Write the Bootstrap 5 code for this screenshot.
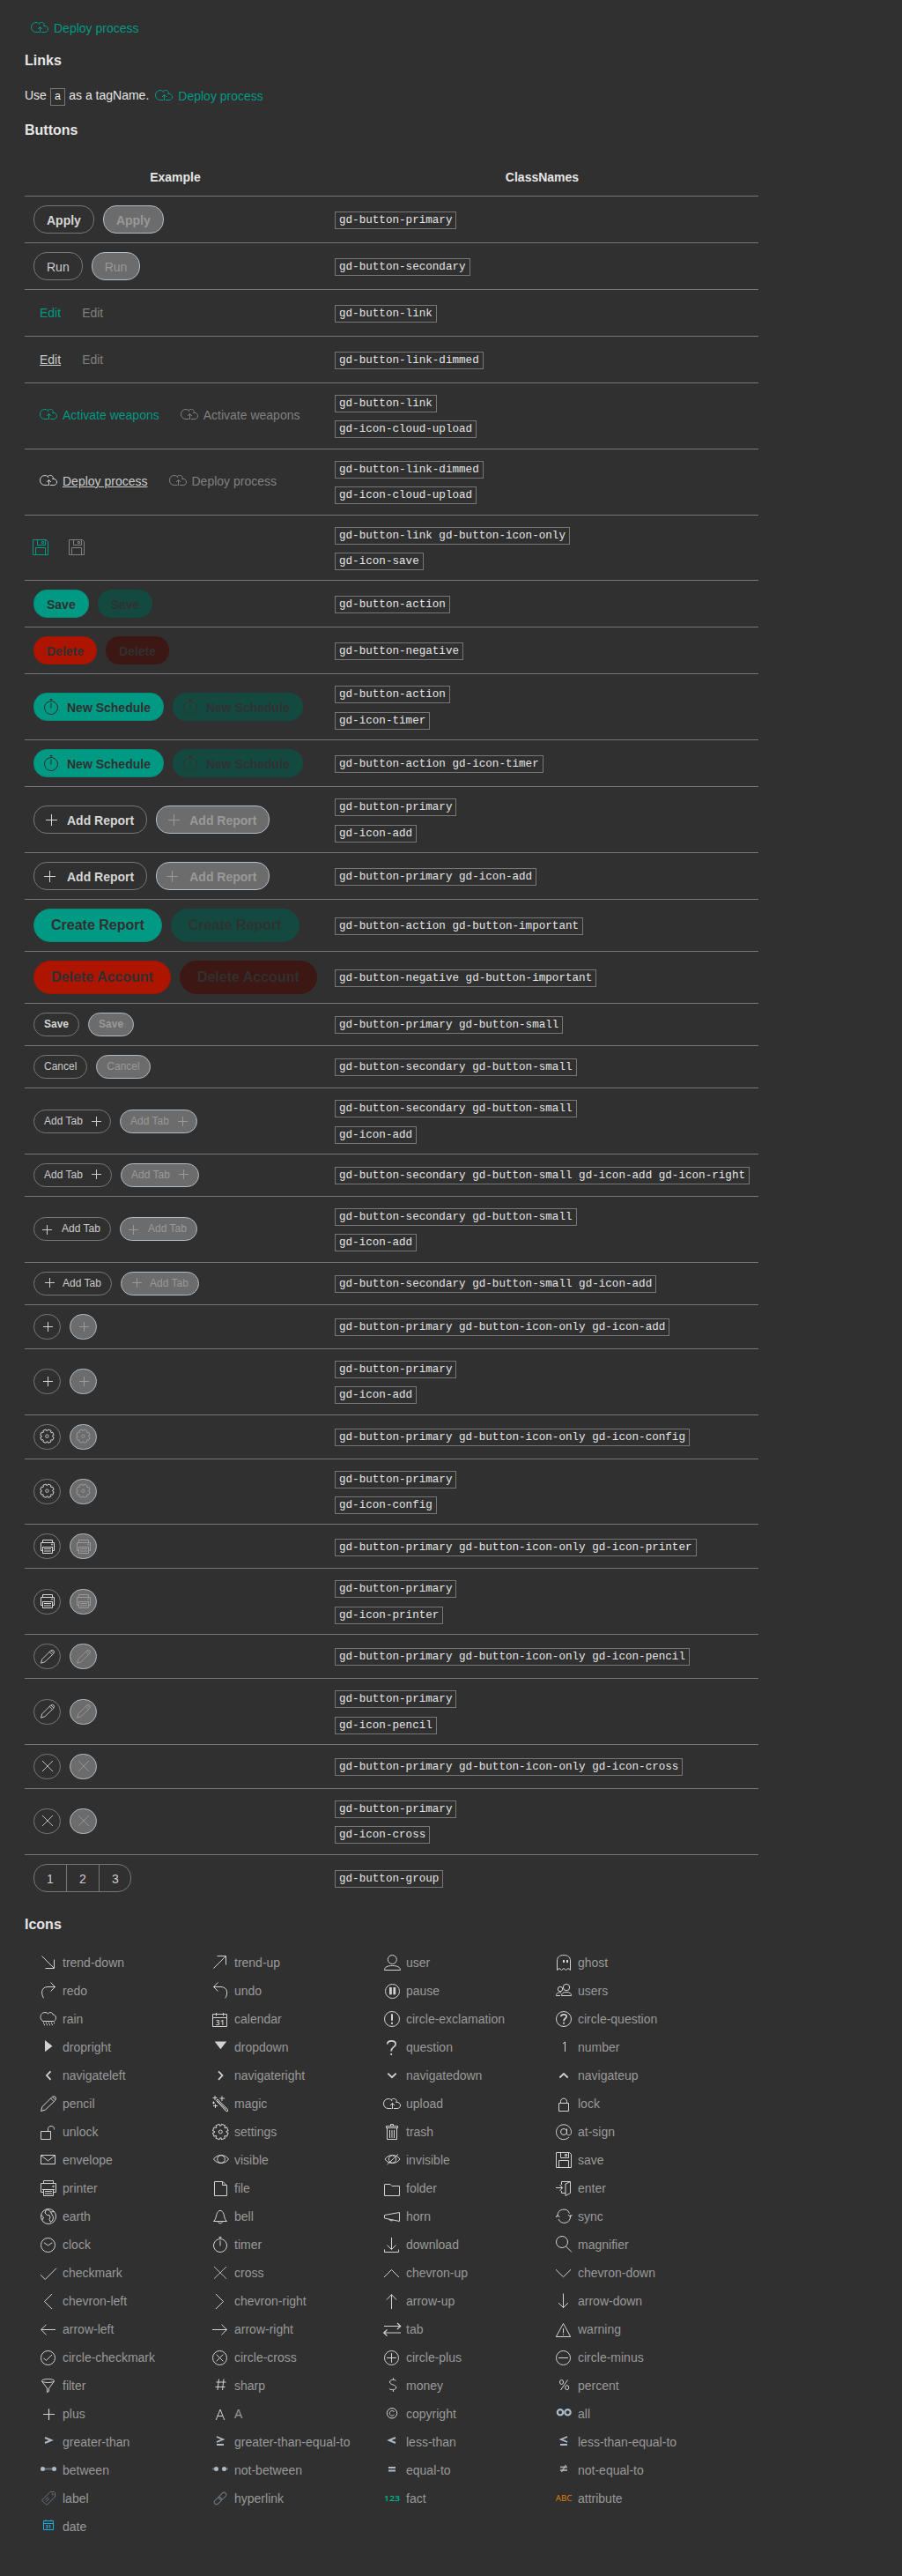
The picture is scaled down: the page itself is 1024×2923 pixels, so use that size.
<!DOCTYPE html>
<html lang="en">
<head>
<meta charset="utf-8">
<meta name="viewport" content="width=device-width, initial-scale=1">
<title>Buttons and icons</title>
<link href="https://cdn.jsdelivr.net/npm/bootstrap@5.3.0/dist/css/bootstrap.min.css" rel="stylesheet">
<style>
body{background:#303030;color:#e6e6e6;font:14px/20px "Liberation Sans",Arial,sans-serif;height:2923px}
main{padding-left:28px;width:861px}
h2{font-size:16px;line-height:24px;font-weight:700;margin:0}
.gd-code{display:inline-block;height:20px;line-height:18px;padding:0 4px;border:1px solid #777;font-family:"Liberation Mono",monospace;font-size:12.6px;color:#e6e6e6;white-space:pre}
svg{width:24px;height:24px;flex:none;overflow:visible;fill:none;stroke:currentColor}
svg text{fill:currentColor;stroke:none;font-family:"Open Sans",sans-serif;text-anchor:middle}
.deploy-top{height:57px;padding-top:7px}
.intro{height:20px;margin:17px 0 18px}
.intro .gd-code{margin-top:2px}
.intro .gd-btn{margin-top:-5px}
/* table */
.gd-table{width:833px;margin:20px 0 14px;border-collapse:separate;border-spacing:0;table-layout:fixed;color:inherit}
.gd-table .c-example{width:342px}
.gd-table>thead>tr>th,.gd-table>tbody>tr>td{background:none;box-shadow:none;border:0;border-bottom:1px solid #777;color:inherit;padding:0 10px;vertical-align:top}
.gd-table>tbody>tr:last-child>td{border-bottom-color:transparent}
.gd-table>thead>tr>th{height:43px;text-align:center;vertical-align:middle}
.gd-table td:first-child>div{display:flex;gap:10px;padding-top:10px}
.gd-table td+td>div{display:flex;flex-direction:column;align-items:flex-start;gap:9px}
.h53 td{height:53px}.h53 td+td{padding-top:17px!important}
.h59 td{height:59px}.h59 td+td{padding-top:20px!important}
.h48 td{height:48px}.h48 td+td{padding-top:14px!important}
.h50 td{height:50px}.h50 td+td{padding-top:15px!important}
.h50.low td+td{padding-top:16px!important}
.h75 td{height:75px}.h74 td{height:74px}
.h75 td+td,.h74 td+td{padding-top:13px!important}
.h75 td:first-child>div,.h74 td:first-child>div{padding-top:21px}
.gd-table .wide td+td>div{gap:10px}
.gd-table .t20 td:first-child>div{padding-top:20px}
.gd-table .t22 td:first-child>div{padding-top:22px}
.gd-table .t23 td:first-child>div{padding-top:23px}
.gd-table .t24 td:first-child>div{padding-top:24px}
/* buttons */
.gd-btn.btn{display:inline-flex;align-items:flex-start;height:32px;padding:1px 14px 0;border:1px solid #777;border-radius:15px;font-size:14px;line-height:30px;color:#ccc;white-space:nowrap;opacity:1}
.gd-btn.btn svg{margin:3px 6px 0 -7px}
.gd-btn.btn.near svg{margin:3px 8px 0 -9px}
.gd-btn.main{font-weight:700;color:#d6d6d6}
.gd-btn.btn:disabled{background:#6c6c6c;border-color:#b0bcc6;color:#999}
.gd-btn.btn.go{background:#009983;border-color:#048a76;color:#303030;font-weight:700}
.gd-btn.btn.go:disabled{background:#144940;border-color:#144940;color:#303232}
.gd-btn.btn.no{background:#ad1500;border-color:#a01604;color:#303030;font-weight:700}
.gd-btn.btn.no:disabled{background:#3d1713;border-color:#3d1713;color:#303030}
.gd-btn.btn.big{height:38px;padding:0 19px;font-size:16px;line-height:36px;border-radius:19px}
.gd-btn.btn.sm{height:27px;padding:0 11px;font-size:12px;line-height:25px;border-radius:14px}
.gd-btn.btn.sm.x88{width:88px}.gd-btn.btn.sm.x89{width:89px}
.gd-btn.btn.sm.x88.end svg{margin:1px 0 0 4px}
.gd-btn.btn.sm.x89.end svg{margin:0 0 0 4px}
.gd-btn.btn.sm.x88.start svg{margin:2px 4px 0 -8px}
.gd-btn.btn.sm.x89.start svg{margin:0 2px 0 -5px}
.gd-btn.btn.ic{width:31px;height:29px;padding:0}
.gd-btn.btn.ic svg{margin:2px 0 0 4px}
.gd-btn.btn.ic.dn svg{margin-top:3px}
.gd-btn.btn.lk{padding:0 6px;background:none;border-color:transparent;color:#009983}
.gd-btn.btn.lk svg{margin:3px 4px 0 -2px}
.gd-btn.btn.dim{color:#ccc}
.gd-btn.dim span{text-decoration:underline}
.gd-btn.btn.lk:disabled{background:none;border-color:transparent;color:#808080}
.gd-btn.dim:disabled span{text-decoration:none}
.gd-btn.btn.lk.ic{width:31px;padding:0}
.gd-btn.btn.lk.ic svg{margin:3px 0 0 -5px}
.gd-group .btn.gd-btn{width:38px;padding-left:14px}
.gd-group .btn.gd-btn:last-child{width:37px}
/* icon list */
.gd-icons{margin:16px 0 0 13px;width:780px;padding:0;list-style:none}
.gd-icons li{width:195px;height:32px;padding-left:2px;line-height:30px;color:#999;white-space:nowrap}
.gd-icons svg{margin:4px 4px 0 0;color:#d2d2d2}
.gd-icons .op{color:#aebbc6}.gd-icons .sl{color:#68737d}
.gd-icons .gr{color:#00b386}.gd-icons .or{color:#e08000}.gd-icons .cy{color:#14b2e2}
</style>
</head>
<body>
<svg class="d-none" aria-hidden="true"><defs>
<g id="cloud"><path d="M11.500 16.500H8C4.500 16.500 2.500 14 2.500 11S4.500 5.500 8 5.500C10 5.500 11.200 6.500 12 8M11 7C11.500 5.700 13 5.400 14.300 5.400 16.300 5.400 17.500 7 17.200 8.800L16.200 9.700M17 9.300C20 9.300 21.500 11 21.500 13S20 16.500 18 16.500H14M12.500 17V10.500M10 13L12.500 10.500 15 13"/></g>
<g id="save"><path d="M3.500 2.500H18.500L20.500 4.500V19.500H3.500ZM8.500 2.500V8.500H17.500V2.500M6.500 19.500V11.500H17.500V19.500M13.500 6.500V4.500H15.500V6.500Z"/></g>
<g id="timer"><circle cx="12" cy="12" r="7.500"/><path d="M12 6.500V12.500M10.500 2.500H13.500M12 2.500V4.500"/></g>
<g id="plus"><path d="M12.500 5V18M6 11.500H19"/></g>
<g id="plus-s"><path d="M11.500 6V17M6 11.500H17"/></g>
<g id="gear"><path transform="translate(12.300 11) rotate(22.500)" d="M8.600-2V2L6.500 2.300 6.100 3.100 7.500 4.700 4.700 7.500 3.100 6.100 2.300 6.500 2 8.600H-2L-2.300 6.500-3.100 6.100-4.700 7.500-7.500 4.700-6.100 3.100-6.500 2.300-8.600 2V-2L-6.500-2.300-6.100-3.100-7.500-4.700-4.700-7.500-3.100-6.100-2.300-6.500-2-8.600H2L2.300-6.500 3.100-6.100 4.700-7.500 7.500-4.700 6.100-3.100 6.500-2.300Z"/><circle cx="12.300" cy="11" r="2"/></g>
<g id="gear-s"><use href="#gear" transform="translate(-.4 1) scale(.88)"/></g>
<g id="printer"><path d="M6.500 5.500V2.500H17.500V5.500M6.500 15.500H3.500V5.500H20.500V15.500H17.500M5 12.500H19M6.500 12.500V19.500H17.500V12.500M8 14.500H16M8 17H16"/><circle cx="17.500" cy="9" r=".8"/></g>
<g id="printer-s"><path d="M5.500 6.500V3.500H16.500V6.500M5.500 15.500H3.500V6.500H18.500V15.500H16.500M5 11.500H17M5.500 11.500V18.500H16.500V11.500M7 13.500H15M7 16H15"/><circle cx="16" cy="8.500" r=".6"/></g>
<g id="pencil"><path d="M3.500 19.500L5 14.500 16 3.500Q18.500 1.800 20 3.500 21.500 5 19.500 7.500L8.500 18ZM14.500 5L18 8.500M16.500 3.500L19.700 6.500"/></g>
<g id="pencil-s"><use href="#pencil" transform="translate(.4 1) scale(.88)"/></g>
<g id="cross-s"><path d="M5 5L17 17M17 5L5 17" stroke-opacity=".85"/></g>
<g id="ring"><circle cx="11.500" cy="11.500" r="8"/></g>
</defs></svg>

<main>
<div class="deploy-top d-flex align-items-center"><a class="gd-btn lk btn" href="#"><svg><use href="#cloud"/></svg><span>Deploy process</span></a></div>
<h2>Links</h2>
<p class="intro d-flex"><span>Use&nbsp;</span><span class="gd-code">a</span><span>&nbsp;as a tagName.</span><a class="gd-btn lk btn" href="#"><svg><use href="#cloud"/></svg><span>Deploy process</span></a></p>
<h2>Buttons</h2>

<table class="table gd-table">
<colgroup><col class="c-example"><col></colgroup>
<thead><tr><th>Example</th><th>ClassNames</th></tr></thead>
<tbody>
<tr class="h53"><td><div><button class="btn gd-btn main">Apply</button><button class="btn gd-btn main" disabled>Apply</button></div></td><td><div><span class="gd-code">gd-button-primary</span></div></td></tr>
<tr class="h53"><td><div><button class="btn gd-btn">Run</button><button class="btn gd-btn" disabled>Run</button></div></td><td><div><span class="gd-code">gd-button-secondary</span></div></td></tr>
<tr class="h53"><td><div><button class="btn gd-btn lk">Edit</button><button class="btn gd-btn lk" disabled>Edit</button></div></td><td><div><span class="gd-code">gd-button-link</span></div></td></tr>
<tr class="h53"><td><div><button class="btn gd-btn lk dim"><span>Edit</span></button><button class="btn gd-btn lk dim" disabled><span>Edit</span></button></div></td><td><div><span class="gd-code">gd-button-link-dimmed</span></div></td></tr>
<tr class="h75 t20"><td><div><button class="btn gd-btn lk"><svg><use href="#cloud"/></svg>Activate weapons</button><button class="btn gd-btn lk" disabled><svg><use href="#cloud"/></svg>Activate weapons</button></div></td><td><div><span class="gd-code">gd-button-link</span><span class="gd-code">gd-icon-cloud-upload</span></div></td></tr>
<tr class="h75 t20"><td><div><button class="btn gd-btn lk dim"><svg><use href="#cloud"/></svg><span>Deploy process</span></button><button class="btn gd-btn lk dim" disabled><svg><use href="#cloud"/></svg><span>Deploy process</span></button></div></td><td><div><span class="gd-code">gd-button-link-dimmed</span><span class="gd-code">gd-icon-cloud-upload</span></div></td></tr>
<tr class="h74"><td><div><button class="btn gd-btn lk ic"><svg><use href="#save"/></svg></button><button class="btn gd-btn lk ic" disabled><svg><use href="#save"/></svg></button></div></td><td><div><span class="gd-code">gd-button-link gd-button-icon-only</span><span class="gd-code">gd-icon-save</span></div></td></tr>
<tr class="h53"><td><div><button class="btn gd-btn go">Save</button><button class="btn gd-btn go" disabled>Save</button></div></td><td><div><span class="gd-code">gd-button-action</span></div></td></tr>
<tr class="h53"><td><div><button class="btn gd-btn no">Delete</button><button class="btn gd-btn no" disabled>Delete</button></div></td><td><div><span class="gd-code">gd-button-negative</span></div></td></tr>
<tr class="h75 wide"><td><div><button class="btn gd-btn go"><svg><use href="#timer"/></svg>New Schedule</button><button class="btn gd-btn go" disabled><svg><use href="#timer"/></svg>New Schedule</button></div></td><td><div><span class="gd-code">gd-button-action</span><span class="gd-code">gd-icon-timer</span></div></td></tr>
<tr class="h53"><td><div><button class="btn gd-btn go"><svg><use href="#timer"/></svg>New Schedule</button><button class="btn gd-btn go" disabled><svg><use href="#timer"/></svg>New Schedule</button></div></td><td><div><span class="gd-code">gd-button-action gd-icon-timer</span></div></td></tr>
<tr class="h75 wide"><td><div><button class="btn gd-btn main"><svg><use href="#plus"/></svg>Add Report</button><button class="btn gd-btn main" disabled><svg><use href="#plus"/></svg>Add Report</button></div></td><td><div><span class="gd-code">gd-button-primary</span><span class="gd-code">gd-icon-add</span></div></td></tr>
<tr class="h53"><td><div><button class="btn gd-btn main near"><svg><use href="#plus"/></svg>Add Report</button><button class="btn gd-btn main near" disabled><svg><use href="#plus"/></svg>Add Report</button></div></td><td><div><span class="gd-code">gd-button-primary gd-icon-add</span></div></td></tr>
<tr class="h59"><td><div><button class="btn gd-btn go big">Create Report</button><button class="btn gd-btn go big" disabled>Create Report</button></div></td><td><div><span class="gd-code">gd-button-action gd-button-important</span></div></td></tr>
<tr class="h59"><td><div><button class="btn gd-btn no big">Delete Account</button><button class="btn gd-btn no big" disabled>Delete Account</button></div></td><td><div><span class="gd-code">gd-button-negative gd-button-important</span></div></td></tr>
<tr class="h48"><td><div><button class="btn gd-btn main sm">Save</button><button class="btn gd-btn main sm" disabled>Save</button></div></td><td><div><span class="gd-code">gd-button-primary gd-button-small</span></div></td></tr>
<tr class="h48"><td><div><button class="btn gd-btn sm">Cancel</button><button class="btn gd-btn sm" disabled>Cancel</button></div></td><td><div><span class="gd-code">gd-button-secondary gd-button-small</span></div></td></tr>
<tr class="h75 wide t24"><td><div><button class="btn gd-btn sm x88 end">Add Tab<svg><use href="#plus-s"/></svg></button><button class="btn gd-btn sm x88 end" disabled>Add Tab<svg><use href="#plus-s"/></svg></button></div></td><td><div><span class="gd-code">gd-button-secondary gd-button-small</span><span class="gd-code">gd-icon-add</span></div></td></tr>
<tr class="h48"><td><div><button class="btn gd-btn sm x89 end">Add Tab<svg><use href="#plus-s"/></svg></button><button class="btn gd-btn sm x89 end" disabled>Add Tab<svg><use href="#plus-s"/></svg></button></div></td><td><div><span class="gd-code">gd-button-secondary gd-button-small gd-icon-add gd-icon-right</span></div></td></tr>
<tr class="h75 t23"><td><div><button class="btn gd-btn sm x88 start"><svg><use href="#plus-s"/></svg>Add Tab</button><button class="btn gd-btn sm x88 start" disabled><svg><use href="#plus-s"/></svg>Add Tab</button></div></td><td><div><span class="gd-code">gd-button-secondary gd-button-small</span><span class="gd-code">gd-icon-add</span></div></td></tr>
<tr class="h48"><td><div><button class="btn gd-btn sm x89 start"><svg><use href="#plus-s"/></svg>Add Tab</button><button class="btn gd-btn sm x89 start" disabled><svg><use href="#plus-s"/></svg>Add Tab</button></div></td><td><div><span class="gd-code">gd-button-secondary gd-button-small gd-icon-add</span></div></td></tr>
<tr class="h50"><td><div><button class="btn gd-btn main ic"><svg><use href="#plus-s"/></svg></button><button class="btn gd-btn main ic" disabled><svg><use href="#plus-s"/></svg></button></div></td><td><div><span class="gd-code">gd-button-primary gd-button-icon-only gd-icon-add</span></div></td></tr>
<tr class="h75 t22"><td><div><button class="btn gd-btn main ic"><svg><use href="#plus-s"/></svg></button><button class="btn gd-btn main ic" disabled><svg><use href="#plus-s"/></svg></button></div></td><td><div><span class="gd-code">gd-button-primary</span><span class="gd-code">gd-icon-add</span></div></td></tr>
<tr class="h50"><td><div><button class="btn gd-btn main ic"><svg><use href="#gear-s"/></svg></button><button class="btn gd-btn main ic" disabled><svg><use href="#gear-s"/></svg></button></div></td><td><div><span class="gd-code">gd-button-primary gd-button-icon-only gd-icon-config</span></div></td></tr>
<tr class="h74 t22"><td><div><button class="btn gd-btn main ic"><svg><use href="#gear-s"/></svg></button><button class="btn gd-btn main ic" disabled><svg><use href="#gear-s"/></svg></button></div></td><td><div><span class="gd-code">gd-button-primary</span><span class="gd-code">gd-icon-config</span></div></td></tr>
<tr class="h50 low"><td><div><button class="btn gd-btn main ic dn"><svg><use href="#printer-s"/></svg></button><button class="btn gd-btn main ic dn" disabled><svg><use href="#printer-s"/></svg></button></div></td><td><div><span class="gd-code">gd-button-primary gd-button-icon-only gd-icon-printer</span></div></td></tr>
<tr class="h75 t23 wide"><td><div><button class="btn gd-btn main ic"><svg><use href="#printer-s"/></svg></button><button class="btn gd-btn main ic" disabled><svg><use href="#printer-s"/></svg></button></div></td><td><div><span class="gd-code">gd-button-primary</span><span class="gd-code">gd-icon-printer</span></div></td></tr>
<tr class="h50"><td><div><button class="btn gd-btn main ic dn"><svg><use href="#pencil-s"/></svg></button><button class="btn gd-btn main ic dn" disabled><svg><use href="#pencil-s"/></svg></button></div></td><td><div><span class="gd-code">gd-button-primary gd-button-icon-only gd-icon-pencil</span></div></td></tr>
<tr class="h75 t23 wide"><td><div><button class="btn gd-btn main ic"><svg><use href="#pencil-s"/></svg></button><button class="btn gd-btn main ic" disabled><svg><use href="#pencil-s"/></svg></button></div></td><td><div><span class="gd-code">gd-button-primary</span><span class="gd-code">gd-icon-pencil</span></div></td></tr>
<tr class="h50"><td><div><button class="btn gd-btn main ic"><svg><use href="#cross-s"/></svg></button><button class="btn gd-btn main ic" disabled><svg><use href="#cross-s"/></svg></button></div></td><td><div><span class="gd-code">gd-button-primary gd-button-icon-only gd-icon-cross</span></div></td></tr>
<tr class="h75 t22"><td><div><button class="btn gd-btn main ic"><svg><use href="#cross-s"/></svg></button><button class="btn gd-btn main ic" disabled><svg><use href="#cross-s"/></svg></button></div></td><td><div><span class="gd-code">gd-button-primary</span><span class="gd-code">gd-icon-cross</span></div></td></tr>
<tr class="h53"><td><div><div class="btn-group gd-group"><button class="btn gd-btn">1</button><button class="btn gd-btn">2</button><button class="btn gd-btn">3</button></div></div></td><td><div><span class="gd-code">gd-button-group</span></div></td></tr>
</tbody>
</table>

<h2>Icons</h2>
<ul class="gd-icons d-flex flex-wrap">
<li class="d-flex"><svg><path d="M4.500 3.500L18 17M18.500 7.500V17.500H8.500"/></svg>trend-down</li>
<li class="d-flex"><svg><path d="M4.500 17.500L18 4M8.500 3.500H18.500V13.500"/></svg>trend-up</li>
<li class="d-flex"><svg><circle cx="12.300" cy="7.500" r="5"/><path d="M3.500 19.500C3.500 16 7 14.500 12.300 14.500S21.500 16 21.500 19.500Z"/></svg>user</li>
<li class="d-flex"><svg><path d="M4.500 19.500V9C4.500 4.500 7.500 2.500 12 2.500S19.500 4.500 19.500 9V19.500L17 17.500 14.500 19.500 12 17.500 9.500 19.500 7 17.500Z"/><path stroke-width="2" d="M12 8V11M16 8V11"/></svg>ghost</li>

<li class="d-flex"><svg><path d="M6.500 19.300C3.500 14 3.500 7 11 6.500H19.500M14.500 1.500L19.500 6.500 14.500 11.500"/></svg>redo</li>
<li class="d-flex"><svg><path d="M17.800 19.300C21 14 20.500 7 13 6.500H4.500M9.500 1.500L4.500 6.500 9.500 11.500"/></svg>undo</li>
<li class="d-flex"><svg><circle cx="12.500" cy="11.500" r="8"/><path stroke-width="2.800" d="M10.400 7V15.300M14.800 7V15.300"/></svg>pause</li>
<li class="d-flex"><svg><circle cx="15" cy="7" r="3.700"/><path d="M9.500 16.500C9.500 13.500 11.500 12.500 15 12.500S20.500 13.500 20.500 16.500Z"/><circle cx="8" cy="9" r="2.700"/><path d="M9 13C5 12.500 3.500 14 3.500 16.500H8"/></svg>users</li>

<li class="d-flex"><svg><path d="M6 13.500C2.500 12 2.500 7.500 4 5.500 6 3 10 3 11.500 5 13.500 2.500 17 3.500 17 6 21 6 21.500 11.500 18.500 13.500Z"/><path stroke-dasharray="1 2" d="M6 15.500H19M7 17.500H19" stroke-width="1.500"/></svg>rain</li>
<li class="d-flex"><svg><path d="M3.500 5.500H19.500V19.500H3.500ZM3.500 9.500H19.500M7.500 4V7.500M15.500 4V7.500"/><text x="11.800" y="17.500" font-size="8.500" font-weight="600" textLength="10">31</text></svg>calendar</li>
<li class="d-flex"><svg><circle cx="12" cy="11" r="8.500"/><path stroke-width="2" d="M12 5.300V12.700M12 14.700V16.700"/></svg>circle-exclamation</li>
<li class="d-flex"><svg><circle cx="12" cy="11" r="8.500"/><path stroke-width="1.700" d="M8.800 8.300C9 5 15.200 5 15.200 8 15.200 10.500 12 10 12 13.300M12 14.800V16.800"/></svg>circle-question</li>

<li class="d-flex"><svg><path fill="currentColor" stroke="none" d="M8 3V16.300L16.500 9.700Z"/></svg>dropright</li>
<li class="d-flex"><svg><path fill="currentColor" stroke="none" d="M5.700 4.500H19.200L12.400 13.300Z"/></svg>dropdown</li>
<li class="d-flex"><svg><path stroke-width="1.700" d="M6.700 7.500C7 2.500 16.500 2.700 16.200 7.500 16 11 11.200 10.500 11.200 15.500M11.200 18V20"/></svg>question</li>
<li class="d-flex"><svg><path d="M11 7L13.500 5V16"/></svg>number</li>

<li class="d-flex"><svg><path stroke-width="1.800" d="M14.500 6.300L10 11 14.500 15.800"/></svg>navigateleft</li>
<li class="d-flex"><svg><path stroke-width="1.800" d="M10 6.300L14.500 11 10 15.800"/></svg>navigateright</li>
<li class="d-flex"><svg><path stroke-width="1.800" d="M7.300 8.700L12 13.200 16.700 8.700"/></svg>navigatedown</li>
<li class="d-flex"><svg><path stroke-width="1.800" d="M7.300 13.500L12 9 16.700 13.500"/></svg>navigateup</li>

<li class="d-flex"><svg><use href="#pencil"/></svg>pencil</li>
<li class="d-flex"><svg><path d="M7.500 7.500L9 6 20.500 17.500V19.500H18.500ZM8.500 7.500L19 18M6 2V7M3.500 4.500H8.500M14 2.500V8M11.500 5H17M4.500 8.500V11.500M3 10H6M6.500 11.500V16M4 13.500H9"/></svg>magic</li>
<li class="d-flex"><svg><use href="#cloud"/></svg>upload</li>
<li class="d-flex"><svg><path d="M6.500 10.500H17.500V19.500H6.500ZM8.500 10.500V8.500C8.500 4 15.500 4 15.500 8.500V10.500"/></svg>lock</li>

<li class="d-flex"><svg><path d="M3.500 10.500H14.500V19.500H3.500ZM11.500 10.500V7.500C11.500 3.500 18.500 3.500 18.500 7.500V8.500"/></svg>unlock</li>
<li class="d-flex"><svg><use href="#gear"/></svg>settings</li>
<li class="d-flex"><svg><path d="M5.500 4.500H18.500V6.500H5.500ZM10.500 4.500V2.500H13.500V4.500M6.500 6.500V19.500H17.500V6.500M9.500 9V18M12 9V18M14.500 9V18"/></svg>trash</li>
<li class="d-flex"><svg><path d="M18 17C14.500 20.500 9 20.500 5.700 17A8.500 8.500 0 1 1 20.500 11.500C20.500 16 15.500 15.500 15.500 12.500V7.500"/><circle cx="12" cy="11" r="3.500"/></svg>at-sign</li>

<li class="d-flex"><svg><path d="M3.500 5.500H19.500V15.500H3.500ZM4 6L11.500 12 19 6"/></svg>envelope</li>
<li class="d-flex"><svg><path d="M4.500 10C8.500 4 17.500 4 21.500 10 17.500 16 8.500 16 4.500 10Z"/><circle cx="13" cy="10" r="4.300"/></svg>visible</li>
<li class="d-flex"><svg><path d="M4 10C8 4 17 4 21 10 17 16 8 16 4 10ZM6.500 16L19 4.500"/><circle cx="12.500" cy="10" r="4.200"/></svg>invisible</li>
<li class="d-flex"><svg><use href="#save"/></svg>save</li>

<li class="d-flex"><svg><use href="#printer"/></svg>printer</li>
<li class="d-flex"><svg><path d="M5.500 3.500H15L19.500 8V19.500H5.500ZM14.500 3.500V7.500H19.500"/></svg>file</li>
<li class="d-flex"><svg><path d="M3.500 19.500V7Q3.500 6.500 4 6.500H10L12 8.500H20.500V19.500Z"/></svg>folder</li>
<li class="d-flex"><svg><path d="M3 10.500H10.500M7.500 7L10.500 10.500 7.500 14M9.500 7V3.500H19.500V16.500L14 19.500V6L19.500 3.500M9.500 14V16.500H14"/></svg>enter</li>

<li class="d-flex"><svg><circle cx="12" cy="11" r="8.500"/><path d="M9 4L8 7 10.500 9.500H13L14 12 13 14.500 14.500 17.500 17 15 17.500 11.500 15.500 8 14.500 6 18 5.500M3.800 9.500L6.500 12 5 15M9 4C11 3 13 3.500 14.500 6"/></svg>earth</li>
<li class="d-flex"><svg><path d="M4.500 16.500C7 14.500 7 12 8 8.500 9.500 3 14.500 3 16 8.500 17 12 17 14.500 19.500 16.500ZM9.500 16.500C9.500 19.500 14.500 19.500 14.500 16.500"/></svg>bell</li>
<li class="d-flex"><svg><path d="M3.500 9.500L20.500 6.500V16.500L3.500 13ZM8.500 14C9 16 12.500 16.500 13.500 15"/></svg>horn</li>
<li class="d-flex"><svg><path d="M5 11.500V10A7 7 0 0 1 18.500 7.500M19.500 9.500V11A7 7 0 0 1 6 14M3 12L5 9.500 7.500 12M17 9L19.500 11.500 21.500 9"/></svg>sync</li>

<li class="d-flex"><svg><use href="#ring"/><path d="M7 8.700L11.500 12 16.300 8.700"/></svg>clock</li>
<li class="d-flex"><svg><use href="#timer"/></svg>timer</li>
<li class="d-flex"><svg><path d="M3.500 16.500V19.500H19.500V16.500M11.500 3V16.500M6.500 11.500L11.500 16.500 16.500 11.500"/></svg>download</li>
<li class="d-flex"><svg><circle cx="10" cy="8" r="6.500"/><path d="M14.500 13L21 19.500"/></svg>magnifier</li>

<li class="d-flex"><svg><path d="M3 13.300L8.300 18.500 21 5.700"/></svg>checkmark</li>
<li class="d-flex"><svg><path stroke-opacity=".8" d="M5 4L19 17.700M19 4L5 17.700"/></svg>cross</li>
<li class="d-flex"><svg><path d="M3 16L11.500 7.500 20 16"/></svg>chevron-up</li>
<li class="d-flex"><svg><path d="M3 7.300L11.500 15.700 20 7.300"/></svg>chevron-down</li>

<li class="d-flex"><svg><path d="M16 3L7.500 11.500 16 20"/></svg>chevron-left</li>
<li class="d-flex"><svg><path d="M7 3L15.500 11.500 7 20"/></svg>chevron-right</li>
<li class="d-flex"><svg><path d="M11.500 3.500V20M6 9.500L11.500 3.700 17 9.500"/></svg>arrow-up</li>
<li class="d-flex"><svg><path d="M11.500 2.500V19M6 13L11.500 18.500 17 13"/></svg>arrow-down</li>

<li class="d-flex"><svg><path d="M4 11.500H20M9.500 5.700L3.700 11.500 9.500 17.300"/></svg>arrow-left</li>
<li class="d-flex"><svg><path d="M3 11.500H19.500M13.500 5.700L19.500 11.500 13.500 17.300"/></svg>arrow-right</li>
<li class="d-flex"><svg><path stroke-width="1.200" d="M3 7.500H21.500M18 4L21.700 7.500 18 11M22 15H3M6.500 11.500L2.700 15 6.500 18.500"/></svg>tab</li>
<li class="d-flex"><svg><path d="M11.500 4.500L19.700 19.500H3.300ZM11.500 10V15.300M11.500 16.500V17.700"/></svg>warning</li>

<li class="d-flex"><svg><use href="#ring"/><path d="M6.500 11.700L9.300 14.500 16 8"/></svg>circle-checkmark</li>
<li class="d-flex"><svg><use href="#ring"/><path d="M7.700 7.700L15.300 15.300M15.300 7.700L7.700 15.300"/></svg>circle-cross</li>
<li class="d-flex"><svg><use href="#ring"/><path d="M11.500 6V17M6 11.500H17"/></svg>circle-plus</li>
<li class="d-flex"><svg><use href="#ring"/><path d="M6 11.500H17"/></svg>circle-minus</li>

<li class="d-flex"><svg><ellipse cx="11.500" cy="5.500" rx="7" ry="2"/><path d="M4.500 6L10.500 14V18.500L12.500 17.500V14L18.500 6"/></svg>filter</li>
<li class="d-flex"><svg><path d="M10.500 3.500L9 16M16 3.500L14.500 16M7.500 7H18.500M6.500 12.500H17.500"/></svg>sharp</li>
<li class="d-flex"><svg><path d="M16.500 5.500C15 3.500 9.500 4 9.500 7S16.800 10 16.800 13 10.500 16.500 9 14.500M13.500 2.300V4.500M13.500 16V18"/></svg>money</li>
<li class="d-flex"><svg><path d="M16.500 4.500L8.500 16"/><ellipse cx="9.500" cy="7" rx="2" ry="2.500"/><ellipse cx="15.700" cy="13.200" rx="2" ry="2.500"/></svg>percent</li>

<li class="d-flex"><svg><path stroke-width="1.200" d="M12.500 5.300V18M6 11.500H19"/></svg>plus</li>
<li class="d-flex"><svg><path d="M7.200 18L12 6 16.800 18M9 13.500H15"/></svg>A</li>
<li class="d-flex"><svg><circle cx="12" cy="10.300" r="5.700"/><path d="M14.500 8.800C13 6.500 9.200 7.500 9.200 10.400S13 14 14.500 12"/></svg>copyright</li>
<li class="d-flex"><svg class="op"><circle cx="8" cy="9.300" r="3.200" stroke-width="2.200"/><circle cx="16.500" cy="9.300" r="3.200" stroke-width="2.200"/></svg>all</li>

<li class="d-flex"><svg class="op"><path stroke-width="1.900" d="M8 6L15.300 9 8 12"/></svg>greater-than</li>
<li class="d-flex"><svg class="op"><path stroke-width="1.900" d="M8 5L15 8 8 11M8 14H16"/></svg>greater-than-equal-to</li>
<li class="d-flex"><svg class="op"><path stroke-width="1.900" d="M16 6L8.700 9 16 12"/></svg>less-than</li>
<li class="d-flex"><svg class="op"><path stroke-width="1.900" d="M16 5L9 8 16 11M8 14H16"/></svg>less-than-equal-to</li>

<li class="d-flex"><svg class="op"><path stroke-width="2" stroke-opacity=".45" d="M8 9.500H16"/><path stroke-width="5" stroke-linecap="round" d="M5.500 9.500h.01M18.500 9.500h.01"/></svg>between</li>
<li class="d-flex"><svg class="op"><path stroke-width="2" stroke-opacity=".45" d="M3 9.500H5.500M18.500 9.500H21"/><path stroke-width="5" stroke-linecap="round" d="M7.500 9.500h.01M16.500 9.500h.01"/></svg>not-between</li>
<li class="d-flex"><svg class="op"><path stroke-width="2" d="M8 8H16M8 11.500H16"/></svg>equal-to</li>
<li class="d-flex"><svg class="op"><path stroke-width="2" stroke-opacity=".8" d="M8 7.500H16M8 11H16"/><path stroke-width="1.300" d="M9.500 13L14.500 5"/></svg>not-equal-to</li>

<li class="d-flex"><svg class="sl"><path d="M4.500 13L14 3.500H18.500L19.500 4.500V9L10 18.500ZM8.500 12.500L11.500 9.500M9.500 14.500L13 11"/><circle cx="16.800" cy="6.300" r=".7"/></svg>label</li>
<li class="d-flex"><svg class="sl"><g transform="rotate(-45 12 11)" stroke-width="1.100"><rect x="3.500" y="8.500" width="9.500" height="5" rx="2.500"/><rect x="11" y="8.500" width="9.500" height="5" rx="2.500"/></g></svg>hyperlink</li>
<li class="d-flex"><svg class="gr"><text x="12" y="13.700" font-size="9.700" font-weight="600" textLength="18.500" lengthAdjust="spacingAndGlyphs">123</text></svg>fact</li>
<li class="d-flex"><svg class="or"><text x="12" y="13.700" font-size="9.700" font-weight="500" textLength="18.500" lengthAdjust="spacingAndGlyphs">ABC</text></svg>attribute</li>

<li class="d-flex"><svg class="cy"><path d="M6.500 4.500H17.500V14.500H6.500ZM6.500 7.500H17.500M9 3V5M15 3V5"/><text x="12" y="13.300" font-size="5.500" font-weight="700" textLength="6.500">31</text></svg>date</li>
</ul>
</main>
<script src="https://cdn.jsdelivr.net/npm/bootstrap@5.3.0/dist/js/bootstrap.bundle.min.js"></script>
</body>
</html>
